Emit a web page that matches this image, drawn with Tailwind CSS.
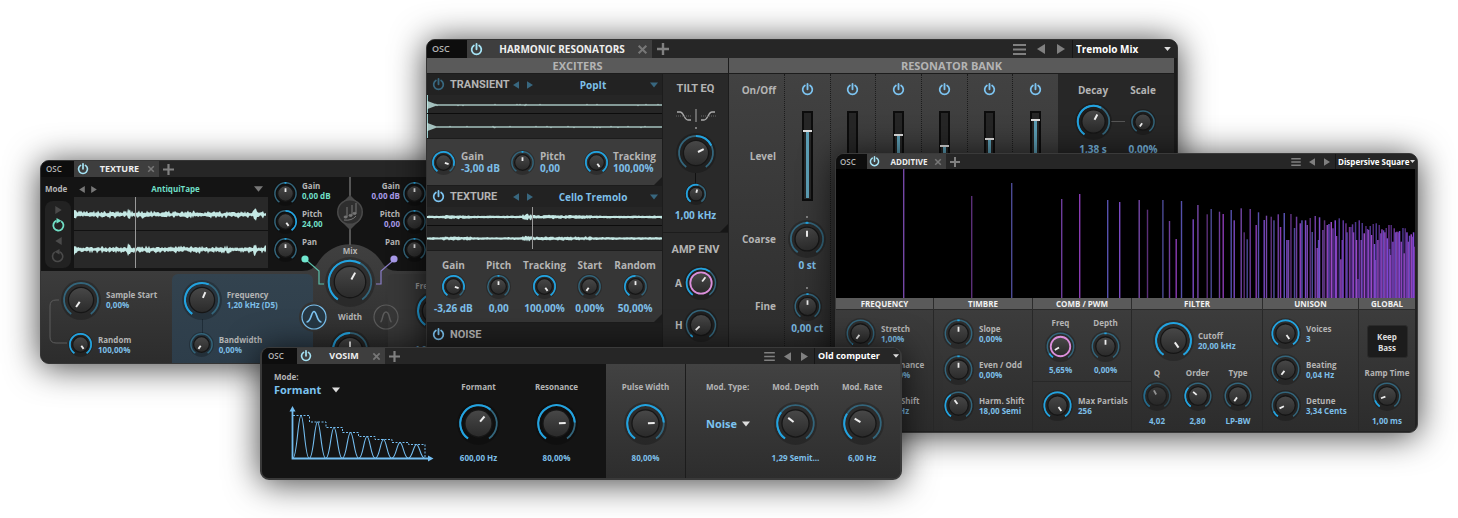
<!DOCTYPE html>
<html lang="en">
<head>
<meta charset="utf-8">
<title>Oscillators</title>
<script src="https://cdn.jsdelivr.net/npm/@tailwindcss/browser@4"></script>
</head>
<body class="bg-white">
<svg class="hidden" aria-hidden="true">
  <symbol id="power" viewBox="0 0 14 14"><path d="M4.2 2.7A5.2 5.2 0 1 0 9.8 2.7" fill="none" stroke="currentColor" stroke-width="1.9" stroke-linecap="round"/><path d="M7 1V6.8" stroke="currentColor" stroke-width="2" stroke-linecap="round"/></symbol>
  <symbol id="close" viewBox="0 0 10 10"><path d="M1.5 1.5 8.5 8.5M8.5 1.5 1.5 8.5" stroke="currentColor" stroke-width="1.9"/></symbol>
  <symbol id="plus" viewBox="0 0 12 12"><path d="M6 0V12M0 6H12" stroke="currentColor" stroke-width="2.4"/></symbol>
  <symbol id="menu" viewBox="0 0 13 11"><path d="M0 1H13M0 5.5H13M0 10H13" stroke="currentColor" stroke-width="1.9"/></symbol>
  <symbol id="prev" viewBox="0 0 8 10"><path d="M8 0V10L0 5Z" fill="currentColor"/></symbol>
  <symbol id="next" viewBox="0 0 8 10"><path d="M0 0V10L8 5Z" fill="currentColor"/></symbol>
  <symbol id="down" viewBox="0 0 10 6"><path d="M0 0H10L5 6Z" fill="currentColor"/></symbol>
</svg>

<main class="relative min-h-screen overflow-hidden font-['Open_Sans','Noto_Sans',sans-serif] font-bold text-[#b4b4b4]">

<!-- Texture -->
<section class="absolute left-[40px] top-[160px] w-[460px] h-[204px] rounded-[9px] border border-[#353535] bg-[#262626] overflow-hidden shadow-[0_3px_34px_rgba(0,0,0,0.75)] text-[8px] leading-[10px]">
  <header class="flex items-center h-[16px] bg-[#262626]">
    <span class="w-[33px] h-full bg-[#0d0d0d] pl-[5px] text-[8px] leading-[16px] font-semibold">OSC</span>
    <div class="flex items-center w-[85px] h-full bg-[#3e3e3e]">
      <button aria-label="Power" class="ml-[3px] text-[#a5e3f5]"><svg class="size-[12px]"><use href="#power"/></svg></button>
      <span class="flex-1 text-center text-[9px] text-[#eee] pl-[3px]">TEXTURE</span>
      <button aria-label="Close" class="mr-[4px] text-[#777]"><svg class="size-[8px]"><use href="#close"/></svg></button>
    </div>
    <button aria-label="Add" class="ml-[4px] text-[#808080]"><svg class="size-[11px]"><use href="#plus"/></svg></button>
  </header>
  <div class="relative h-[187px]">
    <div class="flex h-[94px] bg-[#141414]">
      <div class="w-[33px] pl-[4px] pt-[6px]">
        <div class="h-[12px] leading-[12px]">Mode</div>
        <div class="mt-[6px] flex flex-col items-center justify-between w-[26px] h-[67px] rounded-[8px] bg-[#222] py-[5px] text-[#4a4a4a]">
          <button aria-label="Forward"><svg class="h-[8px] w-[7px]"><use href="#next"/></svg></button>
          <button aria-label="Loop forward" class="text-[#70dfc6]"><svg class="size-[14px]" viewBox="0 0 14 14"><path d="M10.2 3.200A5.100 5.100 0 1 1 5.500 2.700" fill="none" stroke="currentColor" stroke-width="1.800"/><path d="M5.500 0 10.500 2.700 5.500 5.600Z" fill="currentColor"/></svg></button>
          <button aria-label="Backward"><svg class="h-[8px] w-[7px]"><use href="#prev"/></svg></button>
          <button aria-label="Loop backward"><svg class="size-[14px]" viewBox="0 0 14 14"><path d="M3.800 3.200A5.100 5.100 0 1 0 8.500 2.700" fill="none" stroke="currentColor" stroke-width="1.600"/><path d="M8.500 0 3.500 2.700 8.500 5.600Z" fill="currentColor"/></svg></button>
        </div>
      </div>
      <div class="w-[194px] pt-[6px]">
        <div class="flex items-center h-[12px] mb-[2px] text-[#777]">
          <button aria-label="Previous" class="ml-[5px]"><svg class="w-[6px] h-[7px]"><use href="#prev"/></svg></button>
          <button aria-label="Next" class="ml-[6px]"><svg class="w-[6px] h-[7px]"><use href="#next"/></svg></button>
          <select aria-label="Sample" class="appearance-none flex-1 [text-align-last:center] text-[#70dfc6]"><option>AntiquiTape</option></select>
          <svg class="w-[9px] h-[6px] mr-[5px]"><use href="#down"/></svg>
        </div>
        <svg data-wave="texture" class="block w-full h-[71px] bg-[#282828]" viewBox="0 0 194 71" preserveAspectRatio="none"></svg>
      </div>
      <div class="flex flex-col gap-[3px] pl-[5px] pt-[4px] w-[76px]">
        <div class="flex gap-[4px] h-[25px]"><span data-knob="25" data-v="0.5" data-bi data-name="Gain left"></span><div><p>Gain</p><p class="text-[#70dfc6]">0,00&nbsp;dB</p></div></div>
        <div class="flex gap-[4px] h-[25px]"><span data-knob="25" data-v="1" data-bi data-name="Pitch left"></span><div><p>Pitch</p><p class="text-[#70dfc6]">24,00</p></div></div>
        <div class="flex gap-[4px] h-[25px]"><span data-knob="25" data-v="0.5" data-bi data-name="Pan left"></span><p>Pan</p></div>
      </div>
      <div class="flex flex-col gap-[3px] pt-[4px] w-[83px] text-right">
        <div class="flex justify-end gap-[2px] h-[25px]"><div><p>Gain</p><p class="text-[#a99bea]">0,00&nbsp;dB</p></div><span data-knob="25" data-v="0.5" data-bi data-name="Gain right"></span></div>
        <div class="flex justify-end gap-[2px] h-[25px]"><div><p>Pitch</p><p class="text-[#a99bea]">0,00</p></div><span data-knob="25" data-v="0.5" data-bi data-name="Pitch right"></span></div>
        <div class="flex justify-end gap-[2px] h-[25px]"><p>Pan</p><span data-knob="25" data-v="0.5" data-bi data-name="Pan right"></span></div>
      </div>
    </div>
    <div class="flex h-[93px] bg-linear-to-b from-[#3c3c3c] to-[#2c2c2c]">
      <div class="relative w-[131px] pt-[9px]">
        <svg class="absolute left-[8px] top-[28px] w-[20px] h-[46px]" viewBox="0 0 20 46"><path d="M10 1H7Q1 1 1 7V38Q1 44 7 44H18" fill="none" stroke="#5c5c5c"/></svg>
        <div class="flex items-center pl-[20px]"><span data-knob="40" data-v="0" data-name="Sample Start"></span><div class="pl-[5px]"><p>Sample&nbsp;Start</p><p class="text-[#7dbfe8]">0,00%</p></div></div>
        <div class="flex items-center pl-[27px] mt-[12px]"><span data-knob="25" data-v="1" data-name="Random"></span><div class="pl-[5px]"><p>Random</p><p class="text-[#7dbfe8]">100,00%</p></div></div>
      </div>
      <div class="relative w-[142px] mt-[3px] pt-[6px] rounded-t-[6px] bg-linear-to-b from-[#33434f] to-[#2d3d4a]">
        <i class="absolute left-[30px] top-[45px] w-px h-[15px] bg-[#1f2d38]"></i>
        <div class="flex items-center pl-[10px]"><span data-knob="40" data-v="0.58" data-name="Frequency"></span><div class="pl-[5px]"><p>Frequency</p><p class="text-[#7dbfe8]">1,20 kHz (D5)</p></div></div>
        <div class="flex items-center pl-[17px] mt-[12px]"><span data-knob="25" data-v="0" data-name="Bandwidth"></span><div class="pl-[5px]"><p>Bandwidth</p><p class="text-[#7dbfe8]">0,00%</p></div></div>
      </div>
      <div class="ml-[74px] mt-[3px] w-[112px] rounded-tl-[6px] bg-[#383838] pt-[7px] pl-[28px] text-[#999]">
        <p>Frequency</p><span data-knob="40" data-v="0.5" data-name="Frequency right"></span><p class="mt-[13px] text-[#7dbfe8]">1,00 kHz</p>
      </div>
    </div>
    <!-- centre mixer lying over both halves -->
    <svg class="absolute left-[249px] top-0 w-[120px] h-[187px]" viewBox="0 0 120 187">
      <defs><linearGradient id="dome" gradientUnits="userSpaceOnUse" x1="0" y1="66" x2="0" y2="187"><stop offset="0" stop-color="#404040"/><stop offset="1" stop-color="#2c2c2c"/></linearGradient></defs>
      <path d="M12 94Q24 94 29 84A37 37 0 0 1 91 84Q96 94 108 94V97H98V187H24V97H12Z" fill="url(#dome)"/>
      <circle cx="24" cy="140" r="15" fill="#343434"/>
      <path d="M60 0V68" stroke="#555" stroke-width="2"/>
      <path d="M60 18 71 29V42L60 53 49 42V29Z" fill="#484848"/>
      <circle cx="60" cy="35" r="13" fill="#4a4a4a"/><circle cx="60" cy="35" r="11.5" fill="#2e2e2e"/>
      <g fill="#777" stroke="#777"><path d="M57 30V40M62 28V38M66 26V36" /><ellipse cx="55.6" cy="40" rx="1.6" ry="1"/><ellipse cx="60.6" cy="38.4" rx="1.6" ry="1"/><ellipse cx="64.6" cy="36.4" rx="1.6" ry="1"/><path d="M54 43Q62 44 66 39" fill="none"/></g>
      <path d="M15 82 29 94V107H34" fill="none" stroke="#5cc0aa" stroke-width="1.2"/><circle cx="15" cy="82" r="3.6" fill="#70e6ce"/>
      <path d="M105 82 91 94V107H86" fill="none" stroke="#8b7ec8" stroke-width="1.2"/><circle cx="104" cy="82" r="3.6" fill="#a99bea"/>
    </svg>
    <div class="absolute left-[259px] top-[68px] flex flex-col items-center w-[100px]">
      <p class="h-[12px] leading-[12px]">Mix</p>
      <span data-knob="50" data-v="0.6" data-name="Mix"></span>
      <div class="-mt-[3px] flex items-center justify-between w-[98px] h-[26px]">
        <button aria-label="Bell filter" class="text-[#7cc3f0]"><svg class="size-[26px]" viewBox="0 0 26 26"><circle cx="13" cy="13" r="12" fill="#263743" stroke="currentColor" stroke-width="1.2"/><path d="M5.500 18C10.500 18 10 7.500 13 7.500S15.500 18 20.500 18" fill="none" stroke="currentColor" stroke-width="1.700"/></svg></button>
        <p>Width</p>
        <button aria-label="Band filter" class="text-[#5c5c5c]"><svg class="size-[26px]" viewBox="0 0 26 26"><circle cx="13" cy="13" r="12" fill="none" stroke="currentColor" stroke-width="1.200"/><path d="M7.500 18C10 17 9 8 13 8S16 17 18.500 18" fill="none" stroke="currentColor" stroke-width="1.500"/></svg></button>
      </div>
      <span data-knob="40" data-v="0.5" data-name="Width"></span>
    </div>
  </div>
</section>

<!-- Harmonic resonators -->
<section class="absolute left-[426px] top-[39px] w-[752px] h-[360px] rounded-[9px] border border-[#333] bg-[#1c1c1c] overflow-hidden shadow-[0_2px_34px_rgba(0,0,0,0.75)] text-[10px] leading-[12px]">
  <header class="flex items-center h-[18px] bg-[#262626] leading-[16px]">
    <span class="w-[40px] h-full bg-[#0d0d0d] pl-[5px] text-[9px] leading-[18px] font-semibold">OSC</span>
    <div class="flex items-center w-[185px] h-full bg-[#3e3e3e]">
      <button aria-label="Power" class="ml-[3px] text-[#a5e3f5]"><svg class="size-[13px]"><use href="#power"/></svg></button>
      <span class="flex-1 text-center text-[10px] text-[#eee] pl-[4px]">HARMONIC RESONATORS</span>
      <button aria-label="Close" class="mr-[4px] text-[#777]"><svg class="size-[11px]"><use href="#close"/></svg></button>
    </div>
    <button aria-label="Add" class="ml-[5px] text-[#808080]"><svg class="size-[12px]"><use href="#plus"/></svg></button>
    <div class="ml-auto flex items-center h-full text-[#808080]">
      <button aria-label="Menu"><svg class="w-[13px] h-[11px]"><use href="#menu"/></svg></button>
      <button aria-label="Previous preset" class="ml-[11px]"><svg class="w-[8px] h-[10px]"><use href="#prev"/></svg></button>
      <button aria-label="Next preset" class="ml-[12px]"><svg class="w-[8px] h-[10px]"><use href="#next"/></svg></button>
      <div class="ml-[7px] flex items-center h-full w-[105px] border-l border-[#161616] pl-[3px]">
        <select aria-label="Preset" class="appearance-none flex-1 text-white"><option>Tremolo Mix</option></select>
        <svg class="w-[7px] h-[4px] mr-[6px] text-[#ddd]"><use href="#down"/></svg>
      </div>
    </div>
  </header>
  <div class="flex gap-[1px] pr-[3px]">
    <div class="w-[301px]">
      <h2 class="h-[15px] bg-[#5a5a5a] text-center text-[11px] leading-[16px]">EXCITERS</h2>
      <div class="flex gap-[1px] pt-[1px]">
        <div class="w-[235px]">
          <div class="flex items-center h-[21px] bg-[#222] text-[#38677f]">
            <button aria-label="Transient on" class="ml-[5px]"><svg class="size-[13px]"><use href="#power"/></svg></button>
            <h3 class="ml-[5px] w-[63px] font-['Roboto'] text-[11px] text-[#b4b4b4]">TRANSIENT</h3>
            <button aria-label="Previous"><svg class="w-[6px] h-[8px]"><use href="#prev"/></svg></button>
            <button aria-label="Next" class="ml-[8px]"><svg class="w-[6px] h-[8px]"><use href="#next"/></svg></button>
            <select aria-label="Transient sample" class="appearance-none flex-1 pl-[3px] [text-align-last:center] text-[#7dbfe8]"><option>PopIt</option></select>
            <svg class="w-[8px] h-[6px] mr-[4px]"><use href="#down"/></svg>
          </div>
          <svg data-wave="pop" class="block w-full h-[43px] bg-[#262626]" viewBox="0 0 235 43" preserveAspectRatio="none"></svg>
          <div class="relative flex items-center h-[46px] mt-[1px] bg-[#3c3c3c]">
            <div class="flex items-center ml-[4px] w-[79px]"><span data-knob="25" data-v="0.87" data-name="Gain"></span><div class="ml-[5px]"><p>Gain</p><p class="text-[#7dbfe8] whitespace-nowrap">-3,00 dB</p></div></div>
            <div class="flex items-center w-[74px]"><span data-knob="25" data-v="0.5" data-bi data-name="Pitch"></span><div class="ml-[5px]"><p>Pitch</p><p class="text-[#7dbfe8]">0,00</p></div></div>
            <div class="flex items-center"><span data-knob="25" data-v="1" data-name="Tracking"></span><div class="ml-[4px]"><p>Tracking</p><p class="text-[#7dbfe8]">100,00%</p></div></div>
            <svg class="absolute right-0 bottom-0 size-[8px]" viewBox="0 0 8 8"><path d="M8 0V8H0Z" fill="#1c1c1c"/></svg>
          </div>
          <div class="flex items-center h-[21px] mt-[1px] bg-[#222] text-[#38677f]">
            <button aria-label="Texture on" class="ml-[5px] text-[#7cc3f0]"><svg class="size-[13px]"><use href="#power"/></svg></button>
            <h3 class="ml-[5px] w-[63px] font-['Roboto'] text-[11px] text-[#b4b4b4]">TEXTURE</h3>
            <button aria-label="Previous"><svg class="w-[6px] h-[8px]"><use href="#prev"/></svg></button>
            <button aria-label="Next" class="ml-[8px]"><svg class="w-[6px] h-[8px]"><use href="#next"/></svg></button>
            <select aria-label="Texture sample" class="appearance-none flex-1 pl-[3px] [text-align-last:center] text-[#7dbfe8]"><option>Cello Tremolo</option></select>
            <svg class="w-[8px] h-[6px] mr-[4px]"><use href="#down"/></svg>
          </div>
          <svg data-wave="cello" class="block w-full h-[43px] bg-[#262626]" viewBox="0 0 235 43" preserveAspectRatio="none"></svg>
          <div class="relative flex h-[71px] mt-[1px] pt-[8px] px-[4px] bg-[#363636] text-center whitespace-nowrap">
            <div class="flex flex-col items-center w-[45px]"><p>Gain</p><span class="my-[3px]" data-knob="25" data-v="0.87" data-name="Texture gain"></span><p class="text-[#7dbfe8]">-3,26 dB</p></div>
            <div class="flex flex-col items-center w-[46px]"><p>Pitch</p><span class="my-[3px]" data-knob="25" data-v="0.5" data-bi data-name="Texture pitch"></span><p class="text-[#7dbfe8]">0,00</p></div>
            <div class="flex flex-col items-center w-[46px]"><p>Tracking</p><span class="my-[3px]" data-knob="25" data-v="1" data-name="Texture tracking"></span><p class="text-[#7dbfe8]">100,00%</p></div>
            <div class="flex flex-col items-center w-[45px]"><p>Start</p><span class="my-[3px]" data-knob="25" data-v="0" data-name="Start"></span><p class="text-[#7dbfe8]">0,00%</p></div>
            <div class="flex flex-col items-center w-[46px]"><p>Random</p><span class="my-[3px]" data-knob="25" data-v="0.5" data-name="Texture random"></span><p class="text-[#7dbfe8]">50,00%</p></div>
            <svg class="absolute right-0 bottom-0 size-[8px]" viewBox="0 0 8 8"><path d="M8 0V8H0Z" fill="#1c1c1c"/></svg>
          </div>
          <div class="flex items-center h-[60px] pb-[37px] mt-[1px] bg-[#1f1f1f]">
            <button aria-label="Noise on" class="ml-[5px] text-[#7cc3f0]"><svg class="size-[13px]"><use href="#power"/></svg></button>
            <h3 class="ml-[5px] font-['Roboto'] text-[11px]">NOISE</h3>
          </div>
        </div>
        <div class="w-[65px]">
          <div class="relative flex flex-col items-center h-[158px] bg-[#292929] pt-[9px]">
            <h3 class="font-['Roboto'] text-[11px]">TILT EQ</h3>
            <svg class="mt-[14px] w-[42px] h-[14px]" viewBox="0 0 42 14" fill="none" stroke="#aaa"><path d="M2 3H5C9 3 9 11 13 11H16M26 11H29C33 11 33 3 37 3H40" stroke-width="1.300"/><path d="M1 7H17M26 7H41" stroke="#666" stroke-dasharray="1 1"/><path d="M21 0V13"/></svg>
            <i class="mt-[4px] size-[2px] rounded-full bg-[#999]"></i>
            <span class="mt-[4px]" data-knob="40" data-v="0.72" data-bi data-name="Tilt"></span>
            <i class="w-px h-[11px] bg-[#111]"></i>
            <span class="-mt-px" data-knob="22" data-v="0.55" data-name="Tilt frequency"></span>
            <p class="mt-[4px] text-[#7dbfe8]">1,00 kHz</p>
            <svg class="absolute right-0 bottom-0 size-[8px]" viewBox="0 0 8 8"><path d="M8 0V8H0Z" fill="#161616"/></svg>
          </div>
          <div class="mt-[1px] h-[160px] bg-[#292929] pt-[11px]">
            <h3 class="font-['Roboto'] text-[11px] text-center">AMP ENV</h3>
            <div class="mt-[10px] flex items-center pl-[12px]"><span class="w-[9px]">A</span><span data-knob="34" data-v="0.63" data-ring data-name="Attack"></span></div>
            <div class="mt-[8px] flex items-center pl-[12px]"><span class="w-[9px]">H</span><span data-knob="34" data-v="0.04" data-name="Hold"></span></div>
          </div>
        </div>
      </div>
    </div>
    <div class="flex-1">
      <h2 class="h-[15px] bg-[#5a5a5a] text-center text-[11px] leading-[16px]">RESONATOR BANK</h2>
      <div class="flex pt-[1px]">
        <div class="flex w-[329px] h-[330px] bg-linear-to-b from-[#424242] to-[#292929]">
          <div class="w-[55px] pr-[8px] pt-[10px] text-right">
            <p>On/Off</p><p class="mt-[54px]">Level</p><p class="mt-[71px]">Coarse</p><p class="mt-[55px]">Fine</p>
          </div>
          <div id="resonators" class="flex-1 grid grid-cols-6"></div>
        </div>
        <div class="flex-1 flex h-[330px] bg-[#272727] pt-[10px] pl-[12px]">
          <div class="flex flex-col items-center w-[46px]"><p>Decay</p><span class="mt-[7px]" data-knob="37" data-v="0.6" data-name="Decay"></span><p class="mt-[3px] text-[#7dbfe8]">1,38 s</p></div>
          <i class="w-[14px] -mx-[5px] h-px mt-[37px] bg-[#555]"></i>
          <div class="flex flex-col items-center w-[46px]"><p>Scale</p><span class="mt-[13px]" data-knob="26" data-v="0" data-name="Scale"></span><p class="mt-[8px] text-[#7dbfe8]">0,00%</p></div>
        </div>
      </div>
    </div>
  </div>
</section>

<!-- Additive -->
<section class="absolute left-[835px] top-[153px] w-[583px] h-[280px] rounded-[9px] border border-[#3a3a3a] bg-[#222] overflow-hidden shadow-[0_3px_34px_rgba(0,0,0,0.75)] text-[8px] leading-[10px]">
  <header class="flex items-center h-[15px] bg-[#262626]">
    <span class="w-[31px] h-full bg-[#0d0d0d] pl-[4px] text-[8px] leading-[15px] font-semibold">OSC</span>
    <div class="flex items-center w-[79px] h-full bg-[#3e3e3e]">
      <button aria-label="Power" class="ml-[2px] text-[#a5e3f5]"><svg class="size-[11px]"><use href="#power"/></svg></button>
      <span class="flex-1 text-center text-[8px] text-[#eee] pl-[4px]">ADDITIVE</span>
      <button aria-label="Close" class="mr-[4px] text-[#777]"><svg class="size-[8px]"><use href="#close"/></svg></button>
    </div>
    <button aria-label="Add" class="ml-[4px] text-[#808080]"><svg class="size-[10px]"><use href="#plus"/></svg></button>
    <div class="ml-auto flex items-center h-full text-[#808080]">
      <button aria-label="Menu"><svg class="w-[10px] h-[8px]"><use href="#menu"/></svg></button>
      <button aria-label="Previous preset" class="ml-[8px]"><svg class="w-[6px] h-[8px]"><use href="#prev"/></svg></button>
      <button aria-label="Next preset" class="ml-[9px]"><svg class="w-[6px] h-[8px]"><use href="#next"/></svg></button>
      <div class="ml-[5px] flex items-center h-full w-[82px] border-l border-[#161616] pl-[2px]">
        <select aria-label="Preset" class="appearance-none flex-1 text-[8px] text-white"><option>Dispersive Square</option></select>
        <svg class="w-[5px] h-[3px] mr-[2px] text-[#ddd]"><use href="#down"/></svg>
      </div>
    </div>
  </header>
  <div class="pr-[2px]">
    <svg id="spectrum" class="block w-full h-[129px] bg-black" viewBox="0 0 579 129" preserveAspectRatio="none"></svg>
    <div class="grid grid-cols-[98px_99px_99px_131px_96px_1fr] h-[12px] bg-[#5a5a5a] text-center text-[8px] leading-[12px] text-[#f0f0f0] border-b border-[#2a2a2a]">
      <h3 class="border-r border-[#2c2c2c]">FREQUENCY</h3><h3 class="border-r border-[#2c2c2c]">TIMBRE</h3><h3 class="border-r border-[#2c2c2c]">COMB / PWM</h3><h3 class="border-r border-[#2c2c2c]">FILTER</h3><h3 class="border-r border-[#2c2c2c]">UNISON</h3><h3>GLOBAL</h3>
    </div>
    <div class="grid grid-cols-[98px_99px_99px_131px_96px_1fr] h-[121px] bg-linear-to-b from-[#3c3c3c] to-[#2c2c2c] whitespace-nowrap">
      <div class="flex flex-col gap-[5px] pl-[9px] pt-[8px] border-r border-[#282828]">
        <div class="flex items-center gap-[5px]"><span data-knob="31" data-v="0.01" data-name="Stretch"></span><div><p>Stretch</p><p class="text-[#7dbfe8]">1,00%</p></div></div>
        <div class="flex items-center gap-[5px]"><span data-knob="31" data-v="0" data-name="Resonance"></span><div><p>Resonance</p><p class="pl-[6px] text-[#7dbfe8]">0,00%</p></div></div>
        <div class="flex items-center gap-[5px]"><span data-knob="31" data-v="0.5" data-name="Freq Shift"></span><div><p>Freq Shift</p><p class="text-[#7dbfe8]">0,00 Hz</p></div></div>
      </div>
      <div class="flex flex-col gap-[5px] pl-[9px] pt-[8px] border-r border-[#282828]">
        <div class="flex items-center gap-[5px]"><span data-knob="31" data-v="0.5" data-bi data-name="Slope"></span><div><p>Slope</p><p class="text-[#7dbfe8]">0,00%</p></div></div>
        <div class="flex items-center gap-[5px]"><span data-knob="31" data-v="0.5" data-bi data-name="Even / Odd"></span><div><p>Even / Odd</p><p class="text-[#7dbfe8]">0,00%</p></div></div>
        <div class="flex items-center gap-[5px]"><span data-knob="31" data-v="0.375" data-name="Harmonic Shift"></span><div><p>Harm. Shift</p><p class="text-[#7dbfe8]">18,00 Semi</p></div></div>
      </div>
      <div class="border-r border-[#282828]">
        <div class="flex h-[72px] pt-[8px] pl-[5px] border-b border-[#282828]">
          <div class="flex flex-col items-center w-[45px]"><p>Freq</p><span class="mt-[3px] mb-[3px]" data-knob="31" data-v="0.08" data-ring data-name="Comb frequency"></span><p class="text-[#7dbfe8]">5,65%</p></div>
          <div class="flex flex-col items-center w-[45px]"><p>Depth</p><span class="mt-[3px] mb-[3px]" data-knob="31" data-v="0.5" data-bi data-name="Comb depth"></span><p class="text-[#7dbfe8]">0,00%</p></div>
        </div>
        <div class="flex items-center gap-[5px] pl-[9px] pt-[8px]"><span data-knob="31" data-v="1" data-name="Max Partials"></span><div><p>Max Partials</p><p class="text-[#7dbfe8]">256</p></div></div>
      </div>
      <div class="border-r border-[#282828] pt-[10px]">
        <div class="flex items-center gap-[4px] pl-[21px]"><span data-knob="41" data-v="1" data-name="Cutoff"></span><div><p>Cutoff</p><p class="text-[#7dbfe8]">20,00 kHz</p></div></div>
        <div class="flex pl-[5px] mt-[7px]">
          <div class="flex flex-col items-center w-[40px]"><p>Q</p><span class="mt-[3px] mb-[5px]" data-knob="30" data-v="0.4" data-dim data-name="Q"></span><p class="text-[#7dbfe8]">4,02</p></div>
          <div class="flex flex-col items-center w-[41px]"><p>Order</p><span class="mt-[3px] mb-[5px]" data-knob="30" data-v="0.33" data-name="Order"></span><p class="text-[#7dbfe8]">2,80</p></div>
          <div class="flex flex-col items-center w-[40px]"><p>Type</p><span class="mt-[3px] mb-[5px]" data-knob="30" data-v="0" data-name="Type"></span><p class="text-[#7dbfe8]">LP-BW</p></div>
        </div>
      </div>
      <div class="flex flex-col gap-[5px] pl-[7px] pt-[8px] border-r border-[#282828]">
        <div class="flex items-center gap-[5px]"><span data-knob="31" data-v="1" data-name="Voices"></span><div><p>Voices</p><p class="text-[#7dbfe8]">3</p></div></div>
        <div class="flex items-center gap-[5px]"><span data-knob="31" data-v="0.01" data-name="Beating"></span><div><p>Beating</p><p class="text-[#7dbfe8]">0,04 Hz</p></div></div>
        <div class="flex items-center gap-[5px]"><span data-knob="31" data-v="0.1" data-name="Detune"></span><div><p>Detune</p><p class="text-[#7dbfe8]">3,34 Cents</p></div></div>
      </div>
      <div class="flex flex-col items-center pt-[15px]">
        <button class="w-[41px] h-[33px] rounded-[3px] border border-[#2b2b2b] bg-[#1c1c1c] leading-[11px] text-[#ddd]">Keep<br>Bass</button>
        <p class="mt-[10px]">Ramp Time</p><span class="mt-[3px] mb-[5px]" data-knob="30" data-v="0.12" data-name="Ramp Time"></span><p class="text-[#7dbfe8]">1,00 ms</p>
      </div>
    </div>
  </div>
</section>

<!-- Vosim -->
<section class="absolute left-[260px] top-[347px] w-[642px] h-[133px] rounded-[9px] border-2 border-t border-[#3a3a3a] bg-[#262626] overflow-hidden shadow-[0_3px_34px_rgba(0,0,0,0.75)] text-[8px] leading-[10px]">
  <header class="flex items-center h-[16px] bg-[#262626]">
    <span class="w-[35px] h-full bg-[#0d0d0d] pl-[6px] text-[8px] leading-[16px] font-semibold">OSC</span>
    <div class="flex items-center w-[88px] h-full bg-[#3e3e3e]">
      <button aria-label="Power" class="ml-[3px] text-[#a5e3f5]"><svg class="size-[12px]"><use href="#power"/></svg></button>
      <span class="flex-1 text-center text-[9px] text-[#eee] pl-[4px]">VOSIM</span>
      <button aria-label="Close" class="mr-[4px] text-[#777]"><svg class="size-[9px]"><use href="#close"/></svg></button>
    </div>
    <button aria-label="Add" class="ml-[4px] text-[#808080]"><svg class="size-[11px]"><use href="#plus"/></svg></button>
    <div class="ml-auto flex items-center h-full text-[#808080]">
      <button aria-label="Menu"><svg class="w-[11px] h-[9px]"><use href="#menu"/></svg></button>
      <button aria-label="Previous preset" class="ml-[9px]"><svg class="w-[7px] h-[9px]"><use href="#prev"/></svg></button>
      <button aria-label="Next preset" class="ml-[10px]"><svg class="w-[7px] h-[9px]"><use href="#next"/></svg></button>
      <div class="ml-[6px] flex items-center h-full w-[86px] border-l border-[#161616] pl-[3px]">
        <select aria-label="Preset" class="appearance-none flex-1 text-[9px] text-white"><option>Old computer</option></select>
        <svg class="w-[6px] h-[4px] mr-px text-[#ddd]"><use href="#down"/></svg>
      </div>
    </div>
  </header>
  <div class="flex h-[114px] whitespace-nowrap">
    <div class="flex w-[344px] bg-[#141414]">
      <div class="w-[178px] pl-[12px] pt-[8px]">
        <label for="mode" class="block">Mode:</label>
        <div class="flex items-center h-[15px]"><select id="mode" class="appearance-none w-[58px] text-[11px] leading-[15px] text-[#7cc3f0]"><option>Formant</option></select><svg class="w-[8px] h-[6px] text-[#ddd]"><use href="#down"/></svg></div>
        <svg class="mt-[9px] ml-[14px] w-[146px] h-[56px]" viewBox="0 0 146 56" fill="none" stroke="#74bdf0">
          <path d="M4.500 5V52.500H141" stroke-width="1.800"/><path d="M4.500 0 7.500 5.500H1.500ZM145.500 52.500 140 49.500V55.500Z" fill="#74bdf0" stroke="none"/>
          <path d="M5 9.500H21.500V16H38V21.500H54.500V26.500H70.500V30.500H87V33.500H104V36.500H120.500V38.500H137V52" stroke-width="1" stroke-dasharray="2 1.500"/>
          <path id="humps" stroke-width="1.100"/>
        </svg>
      </div>
      <div class="flex flex-col items-center w-[77px] pt-[18px]"><p>Formant</p><span class="mt-[10px]" data-knob="43" data-v="0.64" data-name="Formant"></span><p class="mt-[8px] text-[#7dbfe8]">600,00 Hz</p></div>
      <div class="flex flex-col items-center w-[79px] pt-[18px]"><p>Resonance</p><span class="mt-[10px]" data-knob="43" data-v="0.8" data-name="Resonance"></span><p class="mt-[8px] text-[#7dbfe8]">80,00%</p></div>
    </div>
    <div class="w-[80px] flex flex-col items-center pt-[18px] border-r border-[#1c1c1c] bg-linear-to-b from-[#424242] to-[#2d2d2d]"><p>Pulse Width</p><span class="mt-[10px]" data-knob="43" data-v="0.8" data-name="Pulse Width"></span><p class="mt-[8px] text-[#7dbfe8]">80,00%</p></div>
    <div class="flex-1 flex bg-linear-to-b from-[#424242] to-[#2d2d2d]">
      <div class="w-[76px] pl-[20px] pt-[18px]">
        <label for="modtype" class="block">Mod. Type:</label>
        <div class="mt-[24px] flex items-center h-[16px]"><select id="modtype" class="appearance-none w-[36px] text-[11px] leading-[16px] text-[#7cc3f0]"><option>Noise</option></select><svg class="w-[8px] h-[6px] text-[#ddd]"><use href="#down"/></svg></div>
      </div>
      <div class="flex flex-col items-center w-[67px] pt-[18px]"><p>Mod. Depth</p><span class="mt-[10px]" data-knob="43" data-v="0.32" data-name="Mod. Depth"></span><p class="mt-[8px] text-[#7dbfe8]">1,29 Semit…</p></div>
      <div class="flex flex-col items-center w-[66px] pt-[18px]"><p>Mod. Rate</p><span class="mt-[10px]" data-knob="43" data-v="0.3" data-name="Mod. Rate"></span><p class="mt-[8px] text-[#7dbfe8]">6,00 Hz</p></div>
    </div>
  </div>
</section>
</main>

<script>
// Resonator columns: slider handle position in pixels from the track's top.
document.getElementById('resonators').innerHTML = [19, 60, 23, 34, 27, 8].map((y, i) => `
  <div class="flex flex-col items-center border-l border-dotted border-[#1c1c1c] pt-[9px] whitespace-nowrap">
    <button aria-label="Resonator ${i + 1} on" class="text-[#7cc3f0]"><svg class="block size-[13px]"><use href="#power"/></svg></button>
    <div class="relative mt-[15px] w-[11px] h-[90px]">
      <svg class="block size-full" viewBox="0 0 11 90"><rect x="1" y="1" width="9" height="88" fill="#262626" stroke="#0c0c0c" stroke-width="2"/><rect x="4" y="${y}" width="3" height="${87 - y}" fill="#5c9eb5"/><rect x="1" y="${y}" width="9" height="2" fill="#ddd"/></svg>
      <input type="range" aria-label="Resonator ${i + 1} level" class="absolute inset-0 size-full opacity-0">
    </div>
    ${i ? '' : `
    <i class="mt-[15px] size-[2px] rounded-full bg-[#999]"></i>
    <span class="mt-[2px]" data-knob="38" data-v="0.5" data-bi data-name="Coarse"></span>
    <p class="mt-[1px] text-[#7dbfe8]">0 st</p>
    <i class="mt-[16px] size-[2px] rounded-full bg-[#999]"></i>
    <span class="mt-[3px]" data-knob="29" data-v="0.5" data-bi data-name="Fine"></span>
    <p class="mt-[1px] text-[#7dbfe8]">0,00 ct</p>`}
  </div>`).join('');

// Rotary knobs
const pt = (r, a) => { const t = a * Math.PI / 180; return (r * Math.sin(t)).toFixed(2) + ' ' + (-r * Math.cos(t)).toFixed(2); };
const arc = (r, a, b) => `M${pt(r, a)}A${r} ${r} 0 ${b - a > 180 ? 1 : 0} 1 ${pt(r, b)}`;
document.querySelectorAll('[data-knob]').forEach(el => {
  const d = el.dataset, s = +d.knob, v = +d.v, R = s / 2, ra = s * 0.425, rk = s * 0.315, a = -145 + 290 * v;
  const sw = s > 35 ? 2 : 1.7;
  let from = -145, to = a;
  if ('bi' in d) { from = Math.min(0, a) - (v === 0.5 ? 5 : 0); to = Math.max(0, a) + (v === 0.5 ? 5 : 0); }
  el.classList.add('relative', 'block', 'shrink-0');
  el.style.width = el.style.height = s + 'px';
  el.innerHTML = `<svg class="block size-full" viewBox="${-R} ${-R} ${s} ${s}">
    <defs><linearGradient id="kg" x1="0" y1="0" x2="0" y2="1"><stop offset="0" stop-color="#484848"/><stop offset="1" stop-color="#2a2a2a"/></linearGradient></defs>
    <circle r="${R}" fill="#000" fill-opacity=".22"/>
    <g opacity="${'dim' in d ? 0.55 : 1}">
    <path d="${arc(ra, -145, 145)}" fill="none" stroke="#33657b" stroke-width="${sw - 0.2}"/>
    ${to > from ? `<path d="${arc(ra, from, to)}" fill="none" stroke="#22a3e0" stroke-width="${sw}"/>` : ''}
    <circle r="${rk}" fill="url(#kg)" stroke="${'ring' in d ? '#dc8fdc' : '#161616'}" stroke-width="${'ring' in d ? 1.8 : 1.3}"/>
    <path d="M${pt(rk * 0.18, a)}L${pt(rk * 0.68, a)}" stroke="#eee" stroke-width="${s > 35 ? 2 : 1.8}"/></g></svg>
    <input type="range" min="0" max="1" step="any" value="${v}" aria-label="${d.name}" class="absolute inset-0 size-full opacity-0">`;
});

// Waveforms
let seed = 7;
const rnd = () => (seed = (seed * 16807) % 2147483647) / 2147483647;
const band = (w, cy, amp) => {
  let up = '', dn = '';
  for (let x = 0; x <= w; x++) { up += `L${x} ${(cy - amp(x)).toFixed(1)}`; dn = `L${x} ${(cy + amp(x)).toFixed(1)}` + dn; }
  return `<path d="M0 ${cy}${up}${dn}Z" fill="#c4e8e4"/>`;
};
const shapes = {
  texture: () => {
    const f = x => 1 + rnd() * 1.6 + (rnd() > 0.8 ? 1.6 : 0) + (Math.abs(x - 55) < 2 || Math.abs(x - 181) < 2 ? 2.5 : 0) + (x < 3 ? 2 : 0);
    return band(192, 17.5, f) + band(192, 52.5, f) + '<path d="M0 33.500H194" stroke="#111" stroke-width="1"/><path d="M61.500 0V71" stroke="#999"/>';
  },
  pop: () => {
    const f = x => x < 9 ? 3.4 * (1 - x / 9) + 0.8 : 0.8 + (rnd() > 0.96 ? 0.4 : 0);
    return '<path d="M0.500 0V43" stroke="#9cc"/><g opacity=".8">' + band(235, 10, f) + band(235, 32, f) + '</g><path d="M0 18.500H235" stroke="#0c0c0c"/>';
  },
  cello: () => {
    const f = x => 0.9 + rnd() * (Math.abs(x - 100) < 5 ? 2.4 : (x > 15 && x < 45) || (x > 105 && x < 165) ? 1.3 : 0.5);
    return band(235, 10, f) + band(235, 31.500, f) + '<path d="M0 18.500H235" stroke="#0c0c0c"/><path d="M105.500 0V42" stroke="#999"/>';
  }
};
document.querySelectorAll('[data-wave]').forEach(el => el.innerHTML = shapes[el.dataset.wave]());

// Partials: x, top
const partials = [[67,0],[135,27],[175,14],[225,30],[243,25],[271,31],[283,33]];
const dense = '57:165 82:194 128:165 148:228 168:282 184:168 219:223 233:180 261:208 273:192 298:200 309:207 333:195 342:226 363:190 372:262 381:283 390:192 408:240 415:202 432:225 439:212 453:215 461:226 474:208 481:246 492:204 500:285 505:285 512:207 523:249 529:215 540:235 545:226 556:226 561:240 570:219 576:261 585:213 591:309 595:285 598:217 608:255 613:226 621:240 626:237 633:231 638:250 645:226 649:273 657:220 662:343 666:285 669:226 677:235 680:262 688:246 692:246 697:238 700:262 706:231 709:285 713:402 717:226 723:285 726:234 732:265 737:243 742:252 745:255 750:243 754:270 759:237 763:297 766:345 768:235 773:285 777:240 782:265 785:253 790:256 794:262 798:249 801:280 806:240 808:312 811:330 813:240 818:290 822:250 826:262 830:260 834:262 838:258 843:290 848:249 852:325 855:250 860:262 864:290 868:272 873:268 877:275 880:262 884:305';
dense.split(' ').forEach(p => { const [x, y] = p.split(':'); partials.push([283.5 + x / 3, y / 3 - 24]); });
const hues = ['#7446a6', '#5550ac', '#6d3c9c', '#5a2f78', '#7a49c4', '#8a3bb4', '#4b4a94'];
const hot = ['#7f46d0', '#8a42b8', '#6448b8', '#9a48c4', '#6838a0'];
document.getElementById('spectrum').innerHTML = partials.map(([x, y], i) => {
  const c = x > 490 ? hot[i % 5] : hues[(i * 3) % 7];
  return `<rect x="${x.toFixed(1)}" y="${y.toFixed(1)}" width="${x > 430 ? 1.5 : 1.4}" height="${(129 - y).toFixed(1)}" fill="${c}" fill-opacity="${y > 60 || x < 500 ? 1 : 0.75}"/>`;
}).join('');

// Decaying pulse humps
const tops = [9.5, 16, 21.5, 26.5, 30.5, 33.5, 36.5, 38.5];
document.getElementById('humps').setAttribute('d', tops.map((t, i) => {
  const x = 5 + i * 16.5;
  return `M${x} 52C${x + 4} 52 ${x + 5} ${t} ${x + 8} ${t}S${x + 12} 52 ${x + 16} 52`;
}).join(''));
</script>
</body>
</html>
